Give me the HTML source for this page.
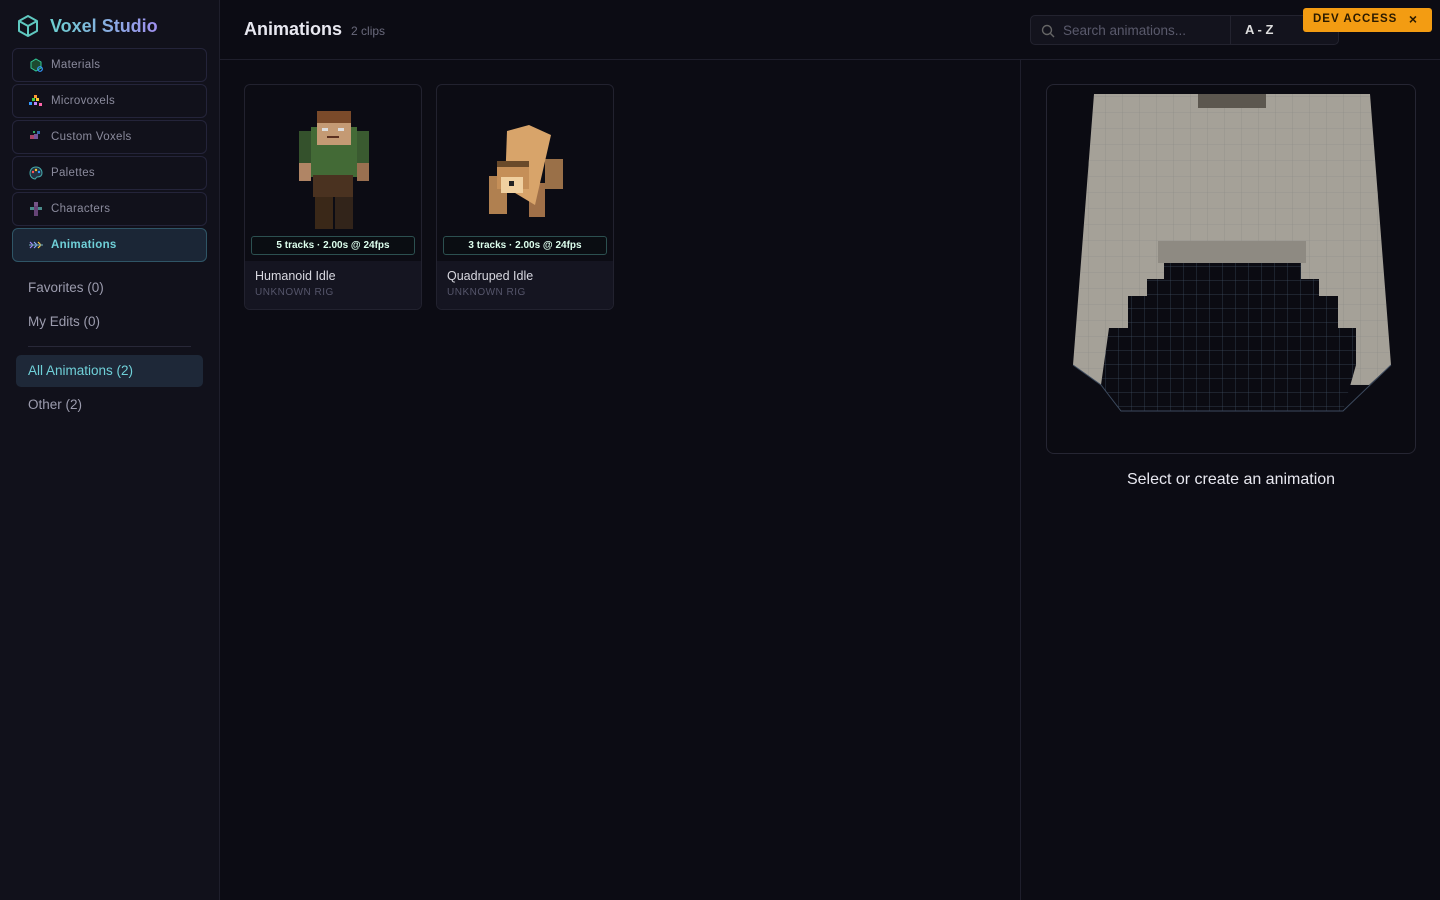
<!DOCTYPE html>
<html><head><meta charset="utf-8"><style>
*{box-sizing:border-box;margin:0;padding:0}
body{width:1440px;height:900px;background:#0c0c14;font-family:"Liberation Sans",sans-serif;color:#d0d0da;position:relative;overflow:hidden}
.side{position:absolute;left:0;top:0;width:220px;height:900px;background:#11111b;border-right:1px solid #1f1f2c}
.logo{position:absolute;left:16px;top:14px;display:flex;align-items:center;gap:10px;font-weight:bold;font-size:18px;color:#7cc6d8}
.nav{position:absolute;left:12px;width:195px;height:34px;border:1px solid #24243a;border-radius:6px;display:flex;align-items:center;padding-left:16px;gap:8px;font-size:11.5px;color:#8a8a9c;letter-spacing:.3px}
.nav.act{background:#1b2636;border-color:#2f5566;color:#6fd0d8;font-weight:bold}
.ic{width:14px;height:14px;display:inline-block}
.lk{position:absolute;left:28px;font-size:13.5px;color:#9c9cae}
.top{position:absolute;left:220px;top:0;right:0;height:60px;border-bottom:1px solid #1f1f2c}
.card{position:absolute;top:84px;width:178px;height:226px;border:1px solid #22222f;border-radius:6px;overflow:hidden;background:#0c0c14}
.card .foot{position:absolute;left:0;right:0;bottom:0;height:48px;background:#151521;padding:8px 10px}
.badge{position:absolute;left:6px;right:6px;top:151px;height:19px;border:1px solid #2c5050;border-radius:3px;font-size:10px;color:#dfe;text-align:center;line-height:17px;background:#0a0d12;font-weight:bold}
</style></head><body>
<div class="side">
 <div class="logo"><svg width="24" height="24" viewBox="0 0 24 24" fill="none" stroke="#5fc8c0" stroke-width="2" stroke-linejoin="round"><path d="M12 2L21 7V17L12 22L3 17V7Z"/><path d="M3 7L12 12L21 7M12 12V22"/></svg><span style="background:linear-gradient(90deg,#6cd0d0,#a090f0);-webkit-background-clip:text;color:transparent">Voxel Studio</span></div>
 <div class="nav" style="top:48px"><svg class="ic" viewBox="0 0 14 14"><path d="M7 1L12 4V10L7 13L2 10V4Z" fill="#1d4a30" stroke="#3c9" stroke-width="1"/><circle cx="11" cy="11" r="2.3" fill="none" stroke="#39f" stroke-width="1.2"/></svg>Materials</div>
 <div class="nav" style="top:84px"><svg class="ic" viewBox="0 0 14 14"><rect x="5" y="1" width="3" height="3" fill="#f93"/><rect x="3" y="4" width="3" height="3" fill="#4c4"/><rect x="7" y="4" width="3" height="3" fill="#fc3"/><rect x="0" y="8" width="3" height="3" fill="#39f"/><rect x="5" y="8" width="3" height="3" fill="#b8f"/><rect x="10" y="9" width="3" height="3" fill="#f6a"/></svg>Microvoxels</div>
 <div class="nav" style="top:120px"><svg class="ic" viewBox="0 0 14 14"><rect x="1" y="5" width="4" height="4" fill="#a46"/><rect x="5" y="4" width="4" height="5" fill="#759"/><rect x="8" y="1" width="3" height="3" fill="#36a"/><rect x="4" y="1" width="2" height="2" fill="#3a6"/></svg>Custom Voxels</div>
 <div class="nav" style="top:156px"><svg class="ic" viewBox="0 0 14 14"><path d="M7 1C3 1 1 4 1 7c0 4 3 6 5 6 1 0 1-2 2-2 3 0 5-1 5-4S11 1 7 1Z" fill="#234" stroke="#4aa" stroke-width="1"/><circle cx="4" cy="6" r="1.2" fill="#f55"/><circle cx="7" cy="4" r="1.2" fill="#fc3"/><circle cx="10" cy="6" r="1.2" fill="#39f"/></svg>Palettes</div>
 <div class="nav" style="top:192px"><svg class="ic" viewBox="0 0 14 14"><rect x="5" y="0" width="4" height="4" fill="#758"/><rect x="1" y="5" width="12" height="3" fill="#4a8a8a"/><rect x="5" y="4" width="4" height="10" fill="#647"/></svg>Characters</div>
 <div class="nav act" style="top:228px"><svg class="ic" viewBox="0 0 14 14" fill="none" stroke-width="1.2"><path d="M1 4L4 7L1 10" stroke="#a8f"/><path d="M5 4L8 7L5 10" stroke="#8af"/><path d="M9 4L12 7L9 10" stroke="#fc4"/><path d="M0 7H14" stroke="#69a"/></svg>Animations</div>
 <div class="lk" style="top:280px">Favorites (0)</div>
 <div class="lk" style="top:314px">My Edits (0)</div>
 <div style="position:absolute;left:28px;top:346px;width:163px;height:1px;background:#282838"></div>
 <div style="position:absolute;left:16px;top:355px;width:187px;height:32px;background:#1e2838;border-radius:5px"></div>
 <div class="lk" style="top:363px;color:#6fd0d8">All Animations (2)</div>
 <div class="lk" style="top:397px">Other (2)</div>
</div>
<div class="top">
 <div style="position:absolute;left:24px;top:19px;font-size:18px;font-weight:bold;color:#e8e8f0">Animations <span style="font-size:12px;font-weight:normal;color:#6a6a7c;margin-left:4px">2 clips</span></div>
 <div style="position:absolute;left:810px;top:15px;width:309px;height:30px;border:1px solid #23232f;border-radius:5px;background:#13131d">
  <svg style="position:absolute;left:10px;top:8px" width="14" height="14" viewBox="0 0 14 14" fill="none" stroke="#666" stroke-width="1.4"><circle cx="6" cy="6" r="4.5"/><path d="M9.5 9.5L13 13"/></svg>
  <span style="position:absolute;left:32px;top:7px;font-size:13.5px;color:#5a5a6c">Search animations...</span>
  <div style="position:absolute;left:199px;top:0;width:1px;height:28px;background:#23232f"></div>
  <span style="position:absolute;left:214px;top:6px;font-size:13px;color:#ddd;font-weight:bold">A - Z</span>
 </div>
 <div style="position:absolute;left:1083px;top:8px;width:129px;height:24px;background:#f39c12;border-radius:3px;font-size:11.5px;font-weight:bold;color:#2a1a00;letter-spacing:1px;padding:5px 10px">DEV ACCESS <span style="position:absolute;right:14px;top:3px;font-size:14px">×</span></div>
</div>
<div style="position:absolute;left:1020px;top:60px;width:1px;height:840px;background:#1f1f2c"></div>

<div class="card" style="left:244px">
 <svg style="position:absolute;left:50px;top:26px" width="80" height="120" viewBox="0 0 80 120">
  <rect x="4" y="20" width="12" height="48" fill="#34512c"/><rect x="62" y="20" width="12" height="48" fill="#3a5a30"/>
  <rect x="4" y="52" width="12" height="18" fill="#b08565"/><rect x="62" y="52" width="12" height="18" fill="#9a7050"/>
  <rect x="16" y="16" width="46" height="50" fill="#436a36"/>
  <rect x="22" y="0" width="34" height="34" fill="#c49a74"/><rect x="22" y="0" width="34" height="12" fill="#7a4a2a"/>
  <rect x="27" y="17" width="6" height="3" fill="#ddd"/><rect x="43" y="17" width="6" height="3" fill="#ddd"/><rect x="32" y="25" width="12" height="2" fill="#5a3020"/>
  <rect x="18" y="64" width="40" height="22" fill="#4a3220"/><rect x="20" y="86" width="18" height="32" fill="#3a2818"/><rect x="40" y="86" width="18" height="32" fill="#32241a"/>
 </svg>
 <div class="badge">5 tracks · 2.00s @ 24fps</div>
 <div class="foot"><div style="font-size:12.5px;color:#d8d8e0">Humanoid Idle</div><div style="font-size:10px;color:#55556a;margin-top:4px;letter-spacing:.5px">UNKNOWN RIG</div></div>
</div>
<div class="card" style="left:436px">
 <svg style="position:absolute;left:48px;top:36px" width="80" height="100" viewBox="0 0 80 100">
  <rect x="60" y="38" width="18" height="30" fill="#9a7048"/><rect x="4" y="55" width="18" height="38" fill="#b08050"/><rect x="44" y="62" width="16" height="34" fill="#a07048"/>
  <path d="M22 10 L44 4 L66 14 L50 84 L20 66Z" fill="#d8a46a"/>
  <rect x="12" y="40" width="32" height="28" fill="#c58f58"/><rect x="16" y="56" width="22" height="16" fill="#f0d0a0"/><rect x="24" y="60" width="5" height="5" fill="#222"/><rect x="12" y="40" width="32" height="6" fill="#6a4a2a"/>
 </svg>
 <div class="badge">3 tracks · 2.00s @ 24fps</div>
 <div class="foot"><div style="font-size:12.5px;color:#d8d8e0">Quadruped Idle</div><div style="font-size:10px;color:#55556a;margin-top:4px;letter-spacing:.5px">UNKNOWN RIG</div></div>
</div>

<div style="position:absolute;left:1046px;top:84px;width:370px;height:370px;border:1px solid #262633;border-radius:8px;background:#0b0b12;overflow:hidden">
 <svg width="370" height="370" viewBox="1046 84 370 370">
  <defs><pattern id="g" width="17" height="16" patternUnits="userSpaceOnUse"><path d="M17 0V16M0 16H17" stroke="#8a8a85" stroke-width=".6" fill="none"/></pattern>
  <pattern id="d" width="13" height="14" patternUnits="userSpaceOnUse"><path d="M13 0V14M0 14H13" stroke="#3c4a5e" stroke-width=".7" fill="none"/></pattern></defs>
  <path d="M1093 93H1369L1390 364L1368 384H1100L1072 364Z" fill="#a5a198"/>
  <path d="M1093 93H1369L1390 364L1368 384H1100L1072 364Z" fill="url(#g)"/>
  <rect x="1157" y="240" width="148" height="22" fill="#8e8a82"/>
  <path d="M1163 262H1300V278H1318V295H1337V327H1355V364L1342 410H1120L1100 384L1108 327H1127V295H1146V278H1163Z" fill="#0b0b12"/>
  <path d="M1163 262H1300V278H1318V295H1337V327H1355V364L1342 410H1120L1100 384L1108 327H1127V295H1146V278H1163Z" fill="url(#d)"/>
  <rect x="1197" y="93" width="68" height="14" fill="#5c574f"/>
  <path d="M1072 364L1100 384L1120 410H1342L1390 364" fill="none" stroke="#3c4a5e" stroke-width="1"/>
 </svg>
</div>
<div style="position:absolute;left:1046px;top:471px;width:370px;text-align:center;font-size:16px;color:#e8e8f0">Select or create an animation</div>
</body></html>
